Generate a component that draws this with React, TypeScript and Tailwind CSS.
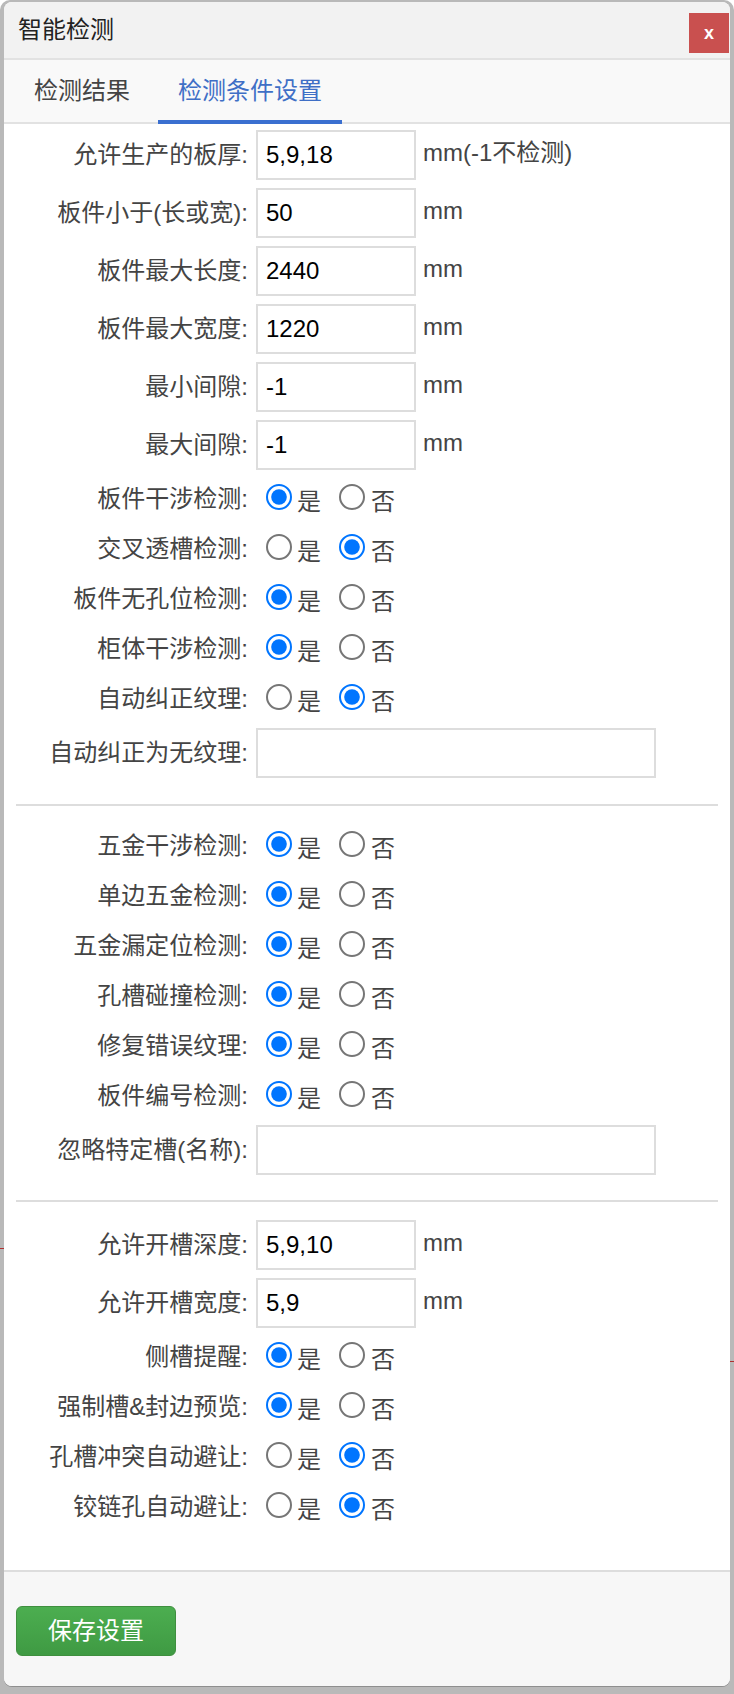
import React from "react";

const FONT = "[font-family:'Liberation_Sans','Noto_Sans_CJK_SC',sans-serif]";

const Label: React.FC<{ text: string; className?: string }> = ({ text, className = "" }) => (
  <label className={`w-[244px] shrink-0 text-right text-[24px] leading-[34px] text-[#444] whitespace-nowrap ${className}`}>{text}:</label>
);

const InputRow: React.FC<{ label: string; value?: string; unit?: string; wide?: boolean; className?: string }> = ({ label, value = "", unit, wide, className = "" }) => (
  <div className={`flex items-center h-[50px] ${className}`}>
    <Label text={label} />
    <input
      type="text"
      defaultValue={value}
      className={`ml-[8px] h-[50px] border-2 border-[#ddd] bg-white px-[8px] text-[24px] text-black outline-none ${wide ? "w-[400px]" : "w-[160px]"}`}
    />
    {unit && <span className="ml-[7px] -mt-[4px] text-[24px] leading-[34px] text-[#444]">{unit}</span>}
  </div>
);

// native radio at double size, gives the thick ring of the screenshot
const Radio: React.FC<{ name: string; checked: boolean; className: string }> = ({ name, checked, className }) => (
  <input type="radio" name={name} defaultChecked={checked} className={`m-0 w-[13px] h-[13px] accent-[#0075ff] [zoom:2] ${className}`} />
);

const RadioRow: React.FC<{ label: string; yes?: boolean; className?: string }> = ({ label, yes = true, className = "" }) => (
  <div className={`flex items-center h-[26px] ${className}`}>
    <Label text={label} className="mt-[3px]" />
    <Radio name={label} checked={yes} className="ml-[9px]" />
    <span className="ml-[5px] mt-[9px] text-[24px] leading-[34px] text-[#444]">是</span>
    <Radio name={label} checked={!yes} className="ml-[9px]" />
    <span className="ml-[6px] mt-[9px] text-[24px] leading-[34px] text-[#444]">否</span>
  </div>
);

const Divider: React.FC<{ className?: string }> = ({ className = "" }) => (
  <div className={`mx-[12px] h-[2px] bg-[#ddd] ${className}`} />
);

export default function App() {
  return (
    <div className={`relative w-[734px] h-[1694px] bg-white overflow-hidden ${FONT}`}>
      <div className="h-full rounded-t-[10px] bg-[#b9b9b9] pt-[2px] pl-[4px]">
        <div className="w-[726px] h-[1684px] rounded-[8px] overflow-hidden bg-white flex flex-col shadow-[0_1px_0_#8f8f8f]">
          {/* header */}
          <div className="h-[56px] shrink-0 bg-[#f2f2f2] flex items-start justify-between pl-[14px]">
            <span className="mt-[11px] text-[24px] leading-[34px] text-[#222]">智能检测</span>
            <button type="button" className="mt-[11px] mr-[1px] w-[40px] h-[40px] bg-[#c9504f] text-white text-[18px] font-bold leading-[36px] flex items-center justify-center">
              x
            </button>
          </div>

          {/* tabs */}
          <div className="h-[66px] shrink-0 border-t-2 border-b-2 border-[#e2e2e2] bg-[#f9f9f9] flex pl-[10px]">
            <div className="h-[64px] px-[20px] pt-[14px] text-[24px] leading-[34px] text-[#444]">检测结果</div>
            <div className="ml-[8px] h-[64px] px-[20px] pt-[14px] text-[24px] leading-[34px] text-[#3f6fc6] border-b-4 border-[#3a6fd0]">检测条件设置</div>
          </div>

          {/* form */}
          <div className="flex-1 min-h-0 flex flex-col">
            <InputRow className="mt-[6px]" label="允许生产的板厚" value="5,9,18" unit="mm(-1不检测)" />
            <InputRow className="mt-[8px]" label="板件小于(长或宽)" value="50" unit="mm" />
            <InputRow className="mt-[8px]" label="板件最大长度" value="2440" unit="mm" />
            <InputRow className="mt-[8px]" label="板件最大宽度" value="1220" unit="mm" />
            <InputRow className="mt-[8px]" label="最小间隙" value="-1" unit="mm" />
            <InputRow className="mt-[8px]" label="最大间隙" value="-1" unit="mm" />
            <RadioRow className="mt-[14px]" label="板件干涉检测" />
            <RadioRow className="mt-[24px]" label="交叉透槽检测" yes={false} />
            <RadioRow className="mt-[24px]" label="板件无孔位检测" />
            <RadioRow className="mt-[24px]" label="柜体干涉检测" />
            <RadioRow className="mt-[24px]" label="自动纠正纹理" yes={false} />
            <InputRow className="mt-[18px]" label="自动纠正为无纹理" wide />

            <Divider className="mt-[26px]" />

            <RadioRow className="mt-[25px]" label="五金干涉检测" />
            <RadioRow className="mt-[24px]" label="单边五金检测" />
            <RadioRow className="mt-[24px]" label="五金漏定位检测" />
            <RadioRow className="mt-[24px]" label="孔槽碰撞检测" />
            <RadioRow className="mt-[24px]" label="修复错误纹理" />
            <RadioRow className="mt-[24px]" label="板件编号检测" />
            <InputRow className="mt-[18px]" label="忽略特定槽(名称)" wide />

            <Divider className="mt-[25px]" />

            <InputRow className="mt-[18px]" label="允许开槽深度" value="5,9,10" unit="mm" />
            <InputRow className="mt-[8px]" label="允许开槽宽度" value="5,9" unit="mm" />
            <RadioRow className="mt-[14px]" label="侧槽提醒" />
            <RadioRow className="mt-[24px]" label="强制槽&封边预览" />
            <RadioRow className="mt-[24px]" label="孔槽冲突自动避让" yes={false} />
            <RadioRow className="mt-[24px]" label="铰链孔自动避让" yes={false} />
          </div>

          {/* footer */}
          <div className="h-[116px] shrink-0 border-t-2 border-[#ddd] bg-[#f7f7f7] pt-[34px] pl-[12px]">
            <button type="button" className="w-[160px] h-[50px] rounded-[6px] border border-[#3f8f3f] bg-gradient-to-b from-[#4cae50] to-[#3f9a43] text-white text-[24px]">
              保存设置
            </button>
          </div>
        </div>
      </div>
      <div className="absolute left-0 top-[1248px] w-[4px] h-[1px] bg-[#b03030]" />
      <div className="absolute right-0 top-[1361px] w-[4px] h-[1px] bg-[#b03030]" />
    </div>
  );
}
